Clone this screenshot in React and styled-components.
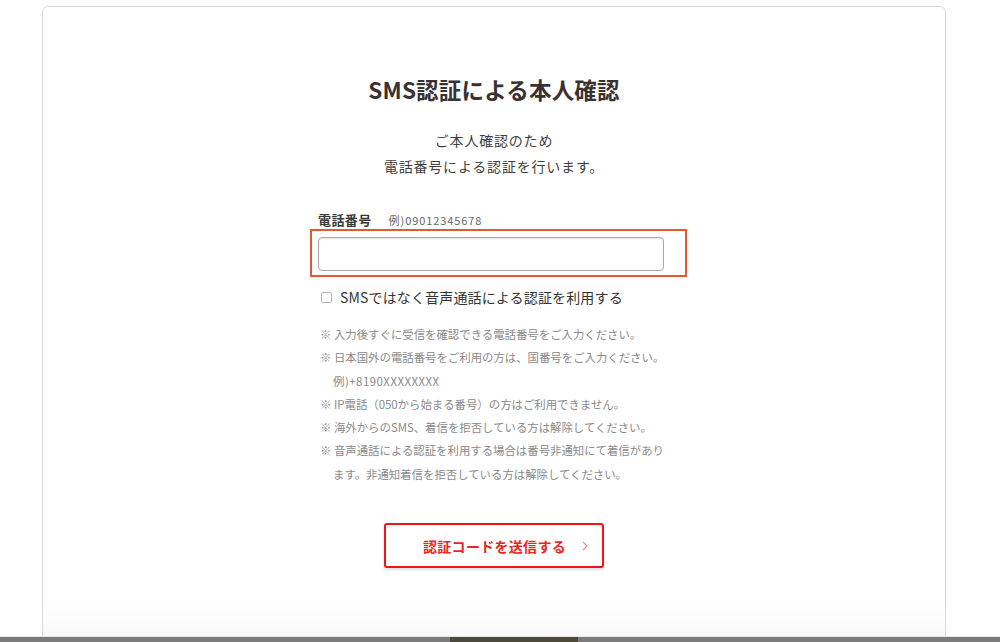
import React from 'react'
import styled, { createGlobalStyle } from 'styled-components'

const GlobalStyle = createGlobalStyle`
  html, body {
    margin: 0;
    padding: 0;
    background: #ffffff;
  }
  body {
    font-family: "Noto Sans CJK JP", "Noto Sans", "Liberation Sans", sans-serif;
    color: #333;
  }
`

const Page = styled.div`
  height: 642px;
  display: flex;
  flex-direction: column;
  overflow: hidden;
`

const Card = styled.div`
  flex: 1;
  margin: 6px 54px 0 42px;
  border: 1px solid #dadada;
  border-bottom: none;
  border-radius: 6px 6px 0 0;
  background: linear-gradient(to bottom, #fff 0, #fff 595px, #f9f9f9 100%);
  display: flex;
  flex-direction: column;
  align-items: center;
  padding-top: 65px;
`

const Title = styled.h1`
  margin: 0;
  font-size: 22.5px;
  line-height: 34px;
  font-weight: 700;
  color: #3a3232;
  letter-spacing: 0.2px;
`

const Lead = styled.p`
  margin: 21px 0 0;
  font-size: 14px;
  line-height: 26px;
  letter-spacing: 0.8px;
  color: #3f3f3f;
  text-align: center;
`

const Form = styled.div`
  width: 346px;
  margin: 31px 0 0 -6px;
  display: flex;
  flex-direction: column;
`

const LabelRow = styled.div`
  display: flex;
  align-items: baseline;
  gap: 17px;
  line-height: 20px;
`

const Label = styled.span`
  font-size: 13px;
  font-weight: 700;
  color: #3a3a3a;
  letter-spacing: 0.4px;
`

const Example = styled.span`
  font-size: 11px;
  color: #666;
  letter-spacing: 0.9px;
`

const InputWrap = styled.div`
  position: relative;
  margin-top: 7px;
`

const Highlight = styled.div`
  position: absolute;
  left: -8px;
  top: -8px;
  right: -23px;
  bottom: -6px;
  border: 2px solid #e8572f;
  pointer-events: none;
`

const Input = styled.input`
  box-sizing: border-box;
  width: 346px;
  height: 34px;
  border: 1px solid #a8a8a8;
  border-radius: 4px;
  background: #fff;
  box-shadow: inset 0 1px 2px rgba(0, 0, 0, 0.12);
  outline: none;
  display: block;
`

const CheckRow = styled.label`
  margin-top: 16px;
  display: flex;
  align-items: center;
  gap: 8px;
  line-height: 20px;
  font-size: 14px;
  color: #333;
  letter-spacing: 0.15px;
  padding-left: 3px;
`

const Box = styled.span`
  width: 9px;
  height: 9px;
  border: 1px solid #b5b5b5;
  border-radius: 2px;
  background: #fff;
`

const Notes = styled.ul`
  list-style: none;
  margin: 16px 0 0;
  padding: 0 0 0 2px;
  font-size: 11.4px;
  line-height: 23.3px;
  color: #8a8a8a;
  white-space: nowrap;
`

const Note = styled.li`
  padding-left: ${p => (p.indent ? '13px' : '0')};
  letter-spacing: ${p => (p.wide ? '0.5px' : '0')};
`

const SendButton = styled.button`
  position: relative;
  margin-top: 37px;
  width: 220px;
  height: 45px;
  box-sizing: border-box;
  border: 2px solid #f01414;
  border-radius: 3px;
  background: #fff;
  box-shadow: 0 2px 3px rgba(0, 0, 0, 0.12);
  color: #e8261c;
  font-family: inherit;
  font-size: 14px;
  font-weight: 700;
  letter-spacing: 0.3px;
  cursor: pointer;
  padding: 0 0 0 1px;
`

const Chevron = styled.span`
  position: absolute;
  right: 14px;
  top: 50%;
  transform: translateY(-50%);
  display: flex;
`

const BottomBar = styled.div`
  height: 5px;
  border-top: 1px solid #e6e6e6;
  background: linear-gradient(to right, #7b7b7b 0, #7b7b7b 450px, #4a4a3c 450px, #4e4a3a 578px, #7b7b7b 578px);
`

const notes = [
  { text: '※ 入力後すぐに受信を確認できる電話番号をご入力ください。' },
  { text: '※ 日本国外の電話番号をご利用の方は、国番号をご入力ください。' },
  { text: '例)+8190XXXXXXXX', indent: true, wide: true },
  { text: '※ IP電話（050から始まる番号）の方はご利用できません。' },
  { text: '※ 海外からのSMS、着信を拒否している方は解除してください。' },
  { text: '※ 音声通話による認証を利用する場合は番号非通知にて着信があり' },
  { text: 'ます。非通知着信を拒否している方は解除してください。', indent: true }
]

const App = () => (
  <Page>
    <GlobalStyle />
    <Card>
      <Title>SMS認証による本人確認</Title>
      <Lead>
        ご本人確認のため
        <br />
        電話番号による認証を行います。
      </Lead>
      <Form>
        <LabelRow>
          <Label>電話番号</Label>
          <Example>例)09012345678</Example>
        </LabelRow>
        <InputWrap>
          <Input type="tel" />
          <Highlight />
        </InputWrap>
        <CheckRow>
          <Box />
          SMSではなく音声通話による認証を利用する
        </CheckRow>
        <Notes>
          {notes.map((n, i) => (
            <Note key={i} indent={n.indent ? 1 : 0} wide={n.wide ? 1 : 0}>{n.text}</Note>
          ))}
        </Notes>
      </Form>
      <SendButton>
        認証コードを送信する
        <Chevron>
          <svg width="6" height="10" viewBox="0 0 6 10">
            <path d="M1 1l4 4-4 4" fill="none" stroke="#f08a80" strokeWidth="1.2" />
          </svg>
        </Chevron>
      </SendButton>
    </Card>
    <BottomBar />
  </Page>
)

export default App
